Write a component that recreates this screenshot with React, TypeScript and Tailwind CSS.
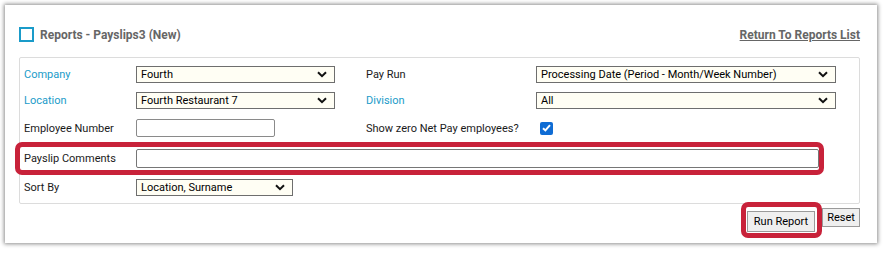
const FONT = "font-['Roboto','Noto_Sans',sans-serif]";

function Chevron() {
  return (
    <svg width="10" height="7" viewBox="0 0 10 7" className="shrink-0">
      <path d="M1 1.2 L5 5.2 L9 1.2" fill="none" stroke="#111" strokeWidth="2" />
    </svg>
  );
}

function Select({ value, width }: { value: string; width: string }) {
  return (
    <div
      className={`${width} h-[17px] flex items-center justify-between pl-[4px] pr-[7px] border border-[#6e6e6e] bg-[#fffef4] text-[11px] text-black`}
    >
      <span className="leading-none">{value}</span>
      <Chevron />
    </div>
  );
}

function Label({ text, blue }: { text: string; blue?: boolean }) {
  return <span className={`text-[11px] leading-none ${blue ? 'text-[#1a9bc9]' : 'text-[#1a1a1a]'}`}>{text}</span>;
}

export default function App() {
  return (
    <div className={`w-[888px] h-[254px] bg-white pt-[5px] pl-[5px] ${FONT}`}>
      <div className="w-[872px] h-[238px] bg-white shadow-[0_0_4px_1px_rgba(0,0,0,0.45)] pt-[22px] pl-[14px] pr-[17px]">
        <div className="flex items-center justify-between h-[15px]">
          <div className="flex items-center gap-[6px]">
            <span className="w-[15px] h-[15px] border-2 border-[#1a9bc9]" />
            <span className="text-[12px] font-bold text-[#666]">Reports - Payslips3 (New)</span>
          </div>
          <a href="#" className="text-[12px] font-bold text-[#666] underline">
            Return To Reports List
          </a>
        </div>

        <div className="mt-[15px] border border-[#dcdcdc] rounded-[2px] px-[4px] pt-[4px] pb-[3px]">
          <div className="grid grid-cols-[112px_230px_170px_1fr] items-center h-[25px]">
            <Label text="Company" blue />
            <Select value="Fourth" width="w-[199px]" />
            <Label text="Pay Run" />
            <Select value="Processing Date (Period - Month/Week Number)" width="w-[300px]" />
          </div>
          <div className="grid grid-cols-[112px_230px_170px_1fr] items-center h-[27px]">
            <Label text="Location" blue />
            <Select value="Fourth Restaurant 7" width="w-[199px]" />
            <Label text="Division" blue />
            <Select value="All" width="w-[300px]" />
          </div>
          <div className="grid grid-cols-[112px_230px_170px_1fr] items-center h-[28px]">
            <Label text="Employee Number" />
            <div className="w-[139px] h-[18px] border border-[#8a8a8a] rounded-[2px] bg-white" />
            <Label text="Show zero Net Pay employees?" />
            <div className="pl-[4px]">
              <span className="flex items-center justify-center w-[13px] h-[13px] rounded-[2px] bg-[#0f6cd4]">
                <svg width="9" height="8" viewBox="0 0 9 8">
                  <path d="M1 4.2 L3.4 6.4 L8 1.2" fill="none" stroke="#fff" strokeWidth="2" />
                </svg>
              </span>
            </div>
          </div>
          <div className="relative grid grid-cols-[112px_1fr] items-center h-[33px]">
            <span className="absolute left-[-9px] right-[31px] top-0 bottom-0 border-[5px] border-[#c8223a] rounded-[7px]" />
            <Label text="Payslip Comments" />
            <div className="w-[683px] h-[19px] border border-[#767676] rounded-[2px] bg-white" />
          </div>
          <div className="grid grid-cols-[112px_1fr] items-center h-[25px]">
            <Label text="Sort By" />
            <Select value="Location, Surname" width="w-[157px]" />
          </div>
        </div>

        <div className="flex justify-end items-start gap-[7px] mt-[4px]">
          <div className="relative">
            <span className="absolute left-[-6px] right-[-7px] top-[-6px] bottom-[-6px] border-[5px] border-[#c8223a] rounded-[7px]" />
            <button className="w-[68px] h-[21px] border border-[#9a9a9a] bg-[#efefef] text-[11px] text-black leading-none">
              Run Report
            </button>
          </div>
          <button className="w-[38px] h-[19px] border border-[#9a9a9a] bg-[#efefef] text-[11px] text-black leading-none">
            Reset
          </button>
        </div>
      </div>
    </div>
  );
}
